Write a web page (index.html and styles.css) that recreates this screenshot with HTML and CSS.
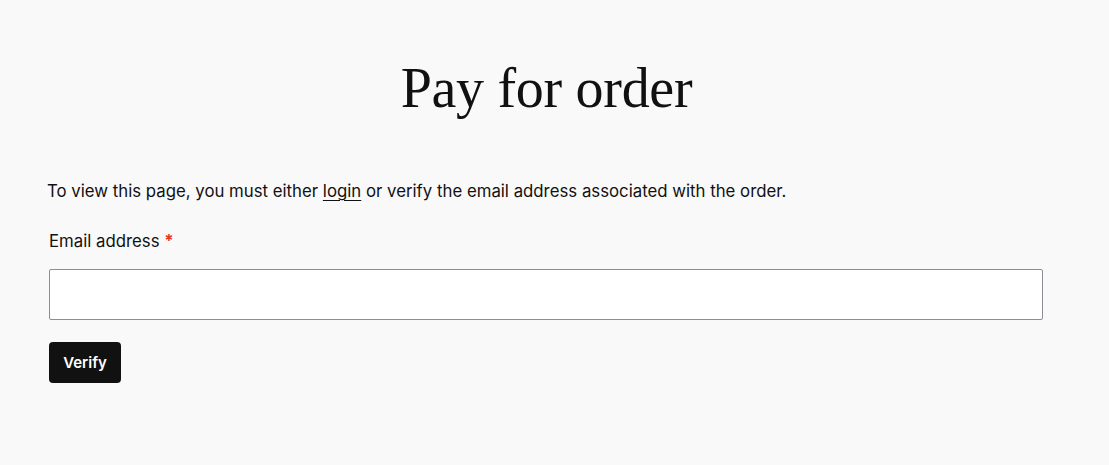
FILE: index.html
```html
<!DOCTYPE html>
<html lang="en">
<head>
<meta charset="utf-8">
<title>Pay for order</title>
<link rel="stylesheet" href="styles.css">
</head>
<body>
<main class="page">
  <h1 class="title">Pay for order</h1>
  <p class="notice">To view this page, you must either <a href="#" class="link">login</a> or verify the email address associated with the order.</p>
  <form class="verify-form">
    <label class="label" for="email">Email address <span class="required">*</span></label>
    <input class="input" id="email" type="email">
    <button class="button" type="button">Verify</button>
  </form>
</main>
</body>
</html>
```

FILE: styles.css
```css
html, body {
  margin: 0;
  padding: 0;
  background: #f9f9f9;
}
body {
  font-family: Inter, "Liberation Sans", sans-serif;
  color: #111;
}
.page {
  width: 999px;
  margin-left: 47px;
  padding-top: 52px;
}
.title {
  margin: 0;
  text-align: center;
  font-family: "Liberation Serif", serif;
  font-weight: 400;
  font-size: 56px;
  line-height: 72px;
  letter-spacing: -0.3px;
  color: #111;
}
.notice {
  margin: 55px 0 0;
  font-size: 16.8px;
  line-height: 24px;
}
.link {
  color: #111;
  text-decoration: underline;
  text-underline-offset: 3px;
  text-decoration-thickness: 1px;
}
.verify-form {
  display: flex;
  flex-direction: column;
  align-items: flex-start;
  padding: 0 3px 0 2px;
  margin-top: 26px;
}
.label {
  font-size: 16.8px;
  line-height: 24px;
}
.required {
  color: #e5361f;
  font-weight: 700;
}
.input {
  box-sizing: border-box;
  width: 994px;
  height: 51px;
  margin-top: 16px;
  border: 1px solid #8d8d93;
  border-radius: 2px;
  background: #fff;
  font: inherit;
}
.button {
  margin-top: 22px;
  box-sizing: border-box;
  width: 72px;
  height: 41px;
  border: 0;
  border-radius: 4px;
  background: #111;
  color: #fff;
  font-family: Inter, "Liberation Sans", sans-serif;
  font-weight: 600;
  font-size: 15px;
}
```
